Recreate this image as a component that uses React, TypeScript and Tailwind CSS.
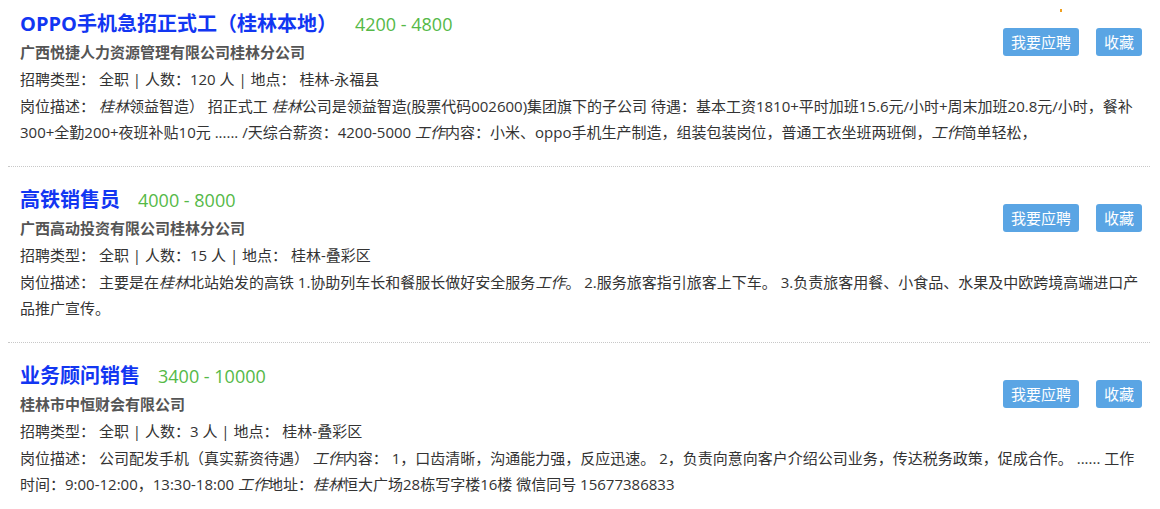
import React from "react";

type Seg = { t: string; i?: boolean };

type Job = {
  title: string;
  salary: string;
  company: string;
  count: string;
  place: string;
  desc: Seg[];
};

const jobs: Job[] = [
  {
    title: "OPPO手机急招正式工（桂林本地）",
    salary: "4200 - 4800",
    company: "广西悦捷人力资源管理有限公司桂林分公司",
    count: "120",
    place: "桂林-永福县",
    desc: [
      { t: "桂林", i: true },
      { t: "领益智造） 招正式工 " },
      { t: "桂林", i: true },
      {
        t: "公司是领益智造(股票代码002600)集团旗下的子公司 待遇：基本工资1810+平时加班15.6元/小时+周末加班20.8元/小时，餐补300+全勤200+夜班补贴10元 ...... /天综合薪资：4200-5000 ",
      },
      { t: "工作", i: true },
      { t: "内容：小米、oppo手机生产制造，组装包装岗位，普通工衣坐班两班倒，" },
      { t: "工作", i: true },
      { t: "简单轻松，" },
    ],
  },
  {
    title: "高铁销售员",
    salary: "4000 - 8000",
    company: "广西高动投资有限公司桂林分公司",
    count: "15",
    place: "桂林-叠彩区",
    desc: [
      { t: "主要是在" },
      { t: "桂林", i: true },
      { t: "北站始发的高铁 1.协助列车长和餐服长做好安全服务" },
      { t: "工作", i: true },
      {
        t: "。 2.服务旅客指引旅客上下车。 3.负责旅客用餐、小食品、水果及中欧跨境高端进口产品推广宣传。",
      },
    ],
  },
  {
    title: "业务顾问销售",
    salary: "3400 - 10000",
    company: "桂林市中恒财会有限公司",
    count: "3",
    place: "桂林-叠彩区",
    desc: [
      { t: "公司配发手机（真实薪资待遇） " },
      { t: "工作", i: true },
      {
        t: "内容： 1，口齿清晰，沟通能力强，反应迅速。 2，负责向意向客户介绍公司业务，传达税务政策，促成合作。 ...... 工作时间：9:00-12:00，13:30-18:00 ",
      },
      { t: "工作", i: true },
      { t: "地址：" },
      { t: "桂林", i: true },
      { t: "恒大广场28栋写字楼16楼 微信同号 15677386833" },
    ],
  },
];

function JobItem({ job, first }: { job: Job; first?: boolean }) {
  return (
    <div
      className={
        "ml-2 mr-[10px] pl-3 pr-2 pb-[21px] border-b border-dotted border-[#c8c8c8] " +
        (first ? "pt-[9px]" : "pt-[18px]")
      }
    >
      <div className="flex justify-between items-start">
        <div>
          <div className="flex items-center h-[30px]">
            <span className="text-[20px] leading-[30px] font-bold text-[#1236f2]">
              {job.title}
            </span>
            <span className="ml-[18px] text-[18px] leading-[30px] text-[#55b948]">
              {job.salary}
            </span>
          </div>
          <div className="text-[15px] leading-[27px] font-bold text-[#555]">
            {job.company}
          </div>
        </div>
        <div className="flex gap-[17px] pt-[19px]">
          <button className="h-[28px] px-2 rounded-[3px] bg-[#5aa5e4] text-white text-[15px] leading-[28px]">
            我要应聘
          </button>
          <button className="h-[28px] px-2 rounded-[3px] bg-[#5aa5e4] text-white text-[15px] leading-[28px]">
            收藏
          </button>
        </div>
      </div>
      <div className="text-[15px] leading-[27px] text-[#333]">
        招聘类型： 全职 | 人数：{job.count} 人 | 地点： {job.place}
      </div>
      <div className="text-[15px] leading-[26px] text-[#333]">
        岗位描述：{" "}
        {job.desc.map((s, k) =>
          s.i ? (
            <em key={k} className="italic">
              {s.t}
            </em>
          ) : (
            <span key={k}>{s.t}</span>
          )
        )}
      </div>
    </div>
  );
}

export default function App() {
  return (
    <div
      className="relative w-[1160px] h-[509px] overflow-hidden bg-white"
      style={{ fontFamily: '"Open Sans", "Noto Sans CJK SC", sans-serif' }}
    >
      <span className="absolute left-[1060px] top-[9px] w-[2px] h-[3px] bg-[#f0a020]" />
      <div>
        {jobs.map((j, idx) => (
          <JobItem key={idx} job={j} first={idx === 0} />
        ))}
      </div>
    </div>
  );
}
